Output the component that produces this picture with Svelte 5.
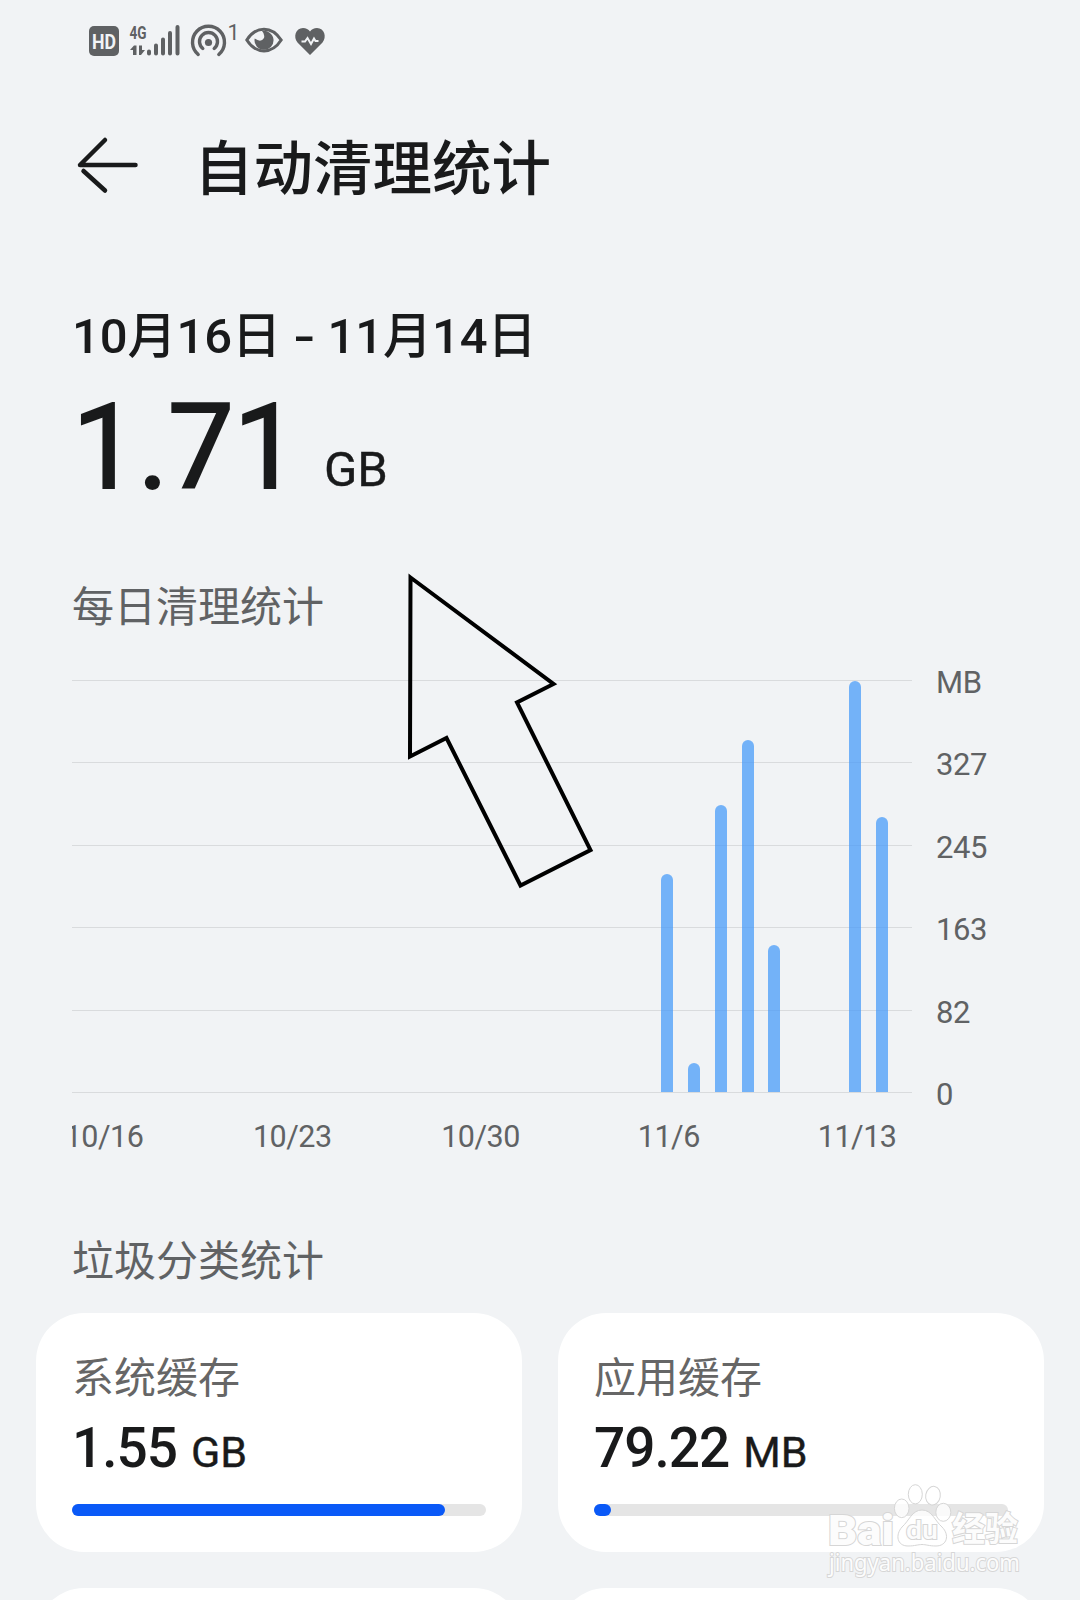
<script>
    const days = 30;
    const max = 409;

    // MB cleaned per day, keyed by day offset from 10/16
    const cleaned = { 21: 216.5, 22: 29, 23: 285, 24: 349, 25: 146, 28: 408.5, 29: 273 };

    const bars = Array.from({ length: days }, (_, i) => cleaned[i] || 0);
    const yLabels = ['MB', '327', '245', '163', '82', '0'];
    const xLabels = { 0: '10/16', 7: '10/23', 14: '10/30', 21: '11/6', 28: '11/13' };

    const cards = [
        { name: '系统缓存', value: '1.55', unit: 'GB', percent: 90.1 },
        { name: '应用缓存', value: '79.22', unit: 'MB', percent: 4.1 }
    ];
</script>

<main>
    <div class="status">
        <svg width="250" height="40" viewBox="85 20 250 40">
            <rect x="89" y="26" width="30" height="30" rx="5" fill="#5f6163" />
            <text class="hd" x="92" y="48.5" textLength="24" lengthAdjust="spacingAndGlyphs">HD</text>
            <text class="net" x="129.500" y="38.500" textLength="17" lengthAdjust="spacingAndGlyphs">4G</text>
            <path d="M130 50L134 45.500H136.500V55H133V50Z M139 45.500H142V50H145L141 55H139Z" class="solid" />
            <g class="signal">
                <path d="M149 51.500V53.500M156 45.500V53.500M163 39.500V53.500M170 33V53.500M177.500 27V53.500" />
            </g>
            <g class="rings">
                <path d="M198.200 54.500A16 16 0 1 1 218.800 54.500" />
                <path d="M202.800 48.500A9 9 0 1 1 214.200 48.500" />
                <circle cx="208.500" cy="42.500" r="3.600" class="solid" />
            </g>
            <text class="one" x="227.500" y="39.500">1</text>
            <path class="eye" d="M246.800 40C256 25.500 272 25.500 281.200 40C272 54.500 256 54.500 246.800 40Z" />
            <path class="solid" d="M262 31A9.500 9.500 0 1 1 254.700 38.500Q261 43 264 38Q265 34 262 31Z" />
            <path class="solid" d="M310 55L297.500 42.500C293 37 295.500 28 303 28C306 28 308.500 29.500 310 31.500C311.500 29.500 314 28 317 28C324.500 28 327 37 322.500 42.500Z" />
            <path class="pulse" d="M301.500 41.500H305L307.500 38L311 44L314 38.500L315.500 41H318.500" />
        </svg>
    </div>

    <header>
        <svg class="back" width="64" height="60" viewBox="75 135 64 60">
            <path d="M135.500 165H80L105 140M83.500 171L105 190.500" />
        </svg>
        <h1>自动清理统计</h1>
    </header>

    <section class="summary">
        <div class="range">10月16日 <b>-</b> 11月14日</div>
        <div class="total"><strong>1.71</strong><span>GB</span></div>
    </section>

    <section class="daily">
        <h2>每日清理统计</h2>
        <div class="chart">
            <div class="plot">
                <div class="grid">
                    {#each yLabels as _}
                        <i></i>
                    {/each}
                </div>
                <div class="bars">
                    {#each bars as mb}
                        <div class="day">
                            {#if mb}
                                <div class="bar" style="height: {mb / max * 100}%"></div>
                            {/if}
                        </div>
                    {/each}
                </div>
            </div>
            <div class="y-axis">
                {#each yLabels as label}
                    <span>{label}</span>
                {/each}
            </div>
        </div>
        <div class="x-axis">
            {#each bars as _, i}
                <div class="tick">{#if xLabels[i]}<span>{xLabels[i]}</span>{/if}</div>
            {/each}
        </div>
    </section>

    <section class="types">
        <h2>垃圾分类统计</h2>
        <div class="cards">
            {#each cards as card}
                <div class="card">
                    <div class="name">{card.name}</div>
                    <div class="value"><strong>{card.value}</strong><span>{card.unit}</span></div>
                    <div class="track"><div class="fill" style="width: {card.percent}%"></div></div>
                </div>
            {/each}
            <div class="card"></div>
            <div class="card"></div>
        </div>
    </section>

    <svg class="pointer" width="200" height="330" viewBox="400 565 200 330">
        <path d="M410.500 577.500L553.500 684L517 702.500L590.500 850L520.500 885.500L446.500 738L410 756.500Z" />
    </svg>

    <svg class="watermark" width="210" height="110" viewBox="820 1480 210 110">
        <text class="brand" x="828" y="1544.500" textLength="66" lengthAdjust="spacingAndGlyphs">Bai</text>
        <ellipse cx="901.700" cy="1508.300" rx="7.300" ry="9.300" />
        <ellipse cx="915.300" cy="1494.300" rx="7" ry="9.600" />
        <ellipse cx="933" cy="1495.700" rx="7.300" ry="9.400" transform="rotate(10 933 1495.700)" />
        <ellipse cx="943.300" cy="1512.300" rx="7.500" ry="9" />
        <path d="M922 1510C932 1510 935 1521 942 1527C950 1535 947 1546 936 1546C929 1546 926 1544.500 922 1544.500C918 1544.500 915 1546 908 1546C897 1546 895 1535 902 1527C909 1521 912 1510 922 1510Z" />
        <text class="du" x="906" y="1539" textLength="32" lengthAdjust="spacingAndGlyphs">du</text>
        <text class="cn" x="952" y="1541" textLength="66" lengthAdjust="spacingAndGlyphs">经验</text>
        <text class="url" x="829" y="1570.500" textLength="191" lengthAdjust="spacingAndGlyphs">jingyan.baidu.com</text>
    </svg>
</main>

<style>
    :global(body) {
        background: #f1f3f5;
    }

    main {
        position: relative;
        width: 1080px;
        height: 1600px;
        overflow: hidden;
        background: #f1f3f5;
        color: #191a1b;
        font-family: Roboto, "Noto Sans CJK SC", sans-serif;
    }

    h1, h2 {
        margin: 0;
    }

    /* status bar */
    .status {
        height: 60px;
        padding: 20px 0 0 85px;
    }
    .status svg {
        display: block;
    }
    .hd {
        fill: #f1f3f5;
        font-size: 20px;
        font-weight: 700;
    }
    .net {
        fill: #5f6163;
        font-size: 18.5px;
        font-weight: 700;
    }
    .one {
        fill: #5f6163;
        font-size: 21.5px;
    }
    .solid {
        fill: #5f6163;
        stroke: none;
    }
    .signal, .rings, .eye {
        fill: none;
        stroke: #5f6163;
        stroke-width: 3;
    }
    .signal {
        stroke-width: 4;
        stroke-linecap: round;
    }
    .rings {
        stroke-width: 3.4;
        stroke-linecap: round;
    }
    .pulse {
        fill: none;
        stroke: #f1f3f5;
        stroke-width: 2;
    }

    header {
        display: flex;
        align-items: center;
        height: 178px;
        padding-left: 75px;
    }
    .back {
        margin-top: -8px;
        fill: none;
        stroke: #191a1b;
        stroke-width: 4.5;
        stroke-linecap: round;
        stroke-linejoin: round;
    }
    h1 {
        margin: 2px 0 0 55px;
        font-size: 59.5px;
        font-weight: 500;
        line-height: 80px;
    }

    /* totals */
    .summary {
        padding: 49px 72px 0;
    }
    .range {
        font-size: 49px;
        font-weight: 500;
        line-height: 60px;
        letter-spacing: -0.1px;
        word-spacing: 3px;
    }
    .range b {
        display: inline-block;
        font-weight: inherit;
        transform: scaleX(1.3);
    }
    .total {
        display: flex;
        align-items: baseline;
        margin-top: 21px;
        line-height: 120px;
    }
    .total strong {
        font-size: 118px;
        font-weight: 400;
        letter-spacing: -0.8px;
        -webkit-text-stroke: 1.8px currentColor;
    }
    .total span {
        position: relative;
        top: -2px;
        margin-left: 25px;
        font-size: 49px;
        line-height: 1;
        -webkit-text-stroke: 0.4px currentColor;
    }

    h2 {
        color: #606264;
        font-size: 42px;
        font-weight: 400;
        line-height: 56px;
    }

    /* daily chart */
    .daily {
        padding: 72px 72px 0;
    }
    .chart {
        display: flex;
        height: 413px;
        margin-top: 44px;
    }
    .plot {
        display: grid;
        width: 840px;
    }
    .grid, .bars {
        grid-area: 1 / 1;
    }
    .grid {
        display: flex;
        flex-direction: column;
        justify-content: space-between;
    }
    .grid i {
        height: 1px;
        background: #d9dbdd;
    }
    .bars, .x-axis {
        display: grid;
        grid-template-columns: repeat(30, 1fr);
        padding: 0 16.5px;
    }
    .bars {
        height: 412px;
    }
    .day {
        display: flex;
        align-items: flex-end;
        justify-content: center;
        height: 412px;
    }
    .bar {
        width: 12px;
        border-radius: 6px 6px 0 0;
        background: rgba(66, 152, 250, 0.72);
    }
    .y-axis {
        display: flex;
        flex-direction: column;
        justify-content: space-between;
        margin: -16px 0 -21px 24px;
        color: #606264;
        font-size: 31px;
        line-height: 38px;
        letter-spacing: -0.4px;
    }
    .x-axis {
        width: 807px;
        margin-top: 24px;
        overflow: hidden;
        color: #606264;
        font-size: 30.5px;
        line-height: 40px;
        letter-spacing: -0.5px;
    }
    .tick {
        display: flex;
        justify-content: center;
        box-sizing: border-box;
        width: 26.9px;
        height: 40px;
        padding-left: 4px;
        white-space: nowrap;
    }

    /* junk types */
    .types {
        padding: 77px 36px 0;
    }
    .types h2 {
        padding-left: 36px;
    }
    .cards {
        display: grid;
        grid-template-columns: 1fr 1fr;
        gap: 36px;
        margin-top: 23px;
    }
    .card {
        box-sizing: border-box;
        height: 239px;
        padding: 38px 36px 0;
        border-radius: 48px;
        background: #fff;
    }
    .name {
        color: #666;
        font-size: 42px;
        line-height: 56px;
    }
    .value {
        display: flex;
        align-items: baseline;
        margin-top: 9px;
        line-height: 64px;
    }
    .value strong {
        font-size: 55px;
        font-weight: 500;
        letter-spacing: -1px;
    }
    .value span {
        margin-left: 14px;
        font-size: 43px;
        line-height: 1;
        -webkit-text-stroke: 0.4px currentColor;
    }
    .track {
        height: 12px;
        margin-top: 24px;
        border-radius: 6px;
        background: #e5e5e5;
    }
    .fill {
        height: 12px;
        border-radius: 6px;
        background: #0a59f7;
    }

    .pointer {
        position: absolute;
        left: 400px;
        top: 565px;
        fill: none;
        stroke: #000;
        stroke-width: 4;
    }

    .watermark {
        position: absolute;
        left: 820px;
        top: 1480px;
        fill: rgba(255, 255, 255, 0.8);
        stroke: #d6d6d6;
        stroke-width: 1;
    }
    .watermark text {
        fill: #fcfcfc;
        stroke-width: 2;
        paint-order: stroke;
    }
    .brand {
        font-size: 43px;
        font-weight: 900;
    }
    .du {
        font-size: 26px;
        font-weight: 500;
    }
    .cn {
        font-size: 34px;
        font-weight: 700;
    }
    .url {
        font-family: "Noto Sans", sans-serif;
        font-size: 24px;
    }
</style>
